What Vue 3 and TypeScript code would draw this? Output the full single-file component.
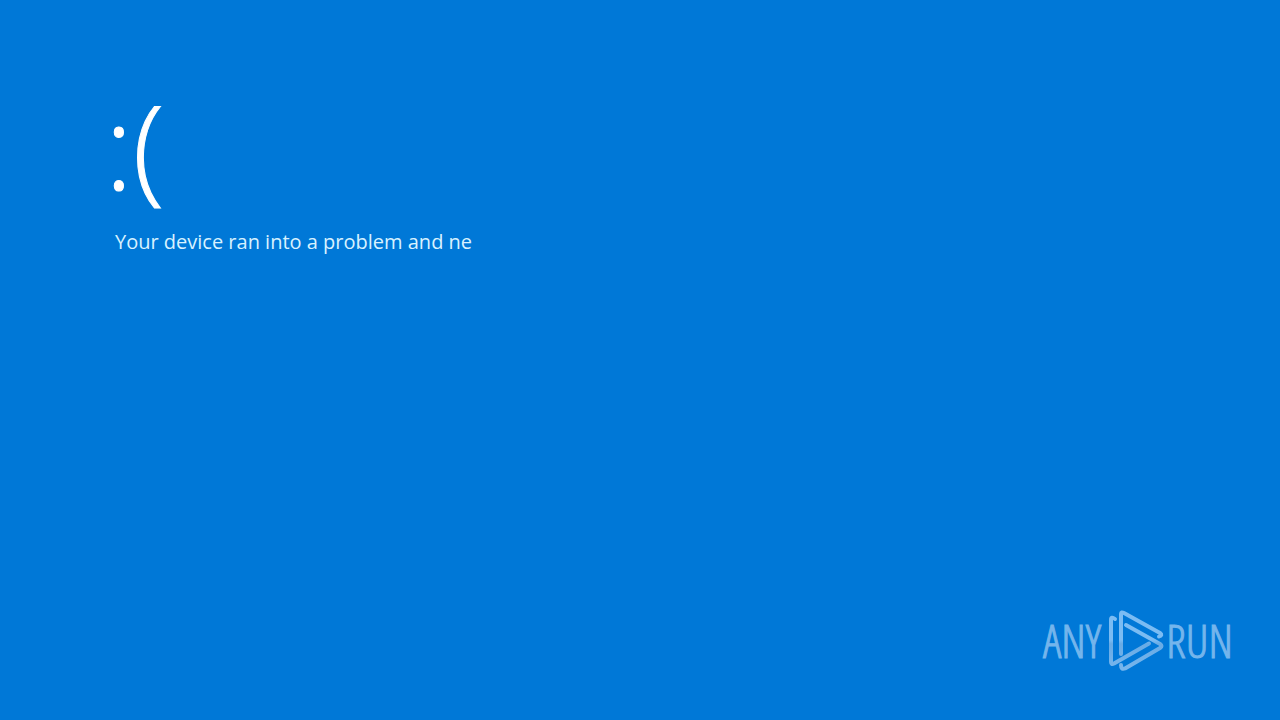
<script setup lang="ts">
const face: string = ':('
const message: string = 'Your device ran into a problem and ne'
</script>

<template>
  <main class="screen">
    <section class="notice">
      <h1 class="face">{{ face }}</h1>
      <p class="message">{{ message }}</p>
    </section>
    <footer class="brand" aria-label="ANY RUN">
      <span class="word">ANY</span>
      <svg class="mark" viewBox="0 0 60 64" aria-hidden="true">
        <defs>
          <linearGradient id="sheen" x1="0" y1="0" x2="0" y2="64" gradientUnits="userSpaceOnUse">
            <stop offset="0" stop-color="#7bbcf3" />
            <stop offset="0.5" stop-color="#7bbcf3" />
            <stop offset="0.56" stop-color="#68abe5" />
            <stop offset="1" stop-color="#78b7ee" />
          </linearGradient>
        </defs>
        <g fill="none" stroke="url(#sheen)" stroke-width="4" stroke-linecap="round" stroke-linejoin="round">
          <path d="M9 11 Q5 8 5 12 V54 Q5 57 8 55.500 L43 35.500" />
          <path d="M15 46 V6 Q15 3.500 18 5 L54 25 Q57 27 53 28.500" />
          <path d="M20 17 L54 36 Q57 38 54 40 L19 60.500 Q15 62 15 57" />
        </g>
      </svg>
      <span class="word">RUN</span>
    </footer>
  </main>
</template>

<style>
body {
  margin: 0;
  background: #0078d7;
}
</style>

<style scoped>
.screen {
  box-sizing: border-box;
  min-height: 100vh;
  display: flex;
  flex-direction: column;
  justify-content: space-between;
  padding: 75px 47px 48px 105px;
  background: #0078d7;
  color: #fff;
  font-family: "Open Sans", "Noto Sans", sans-serif;
}

.face {
  margin: 0;
  font-size: 116px;
  line-height: 140px;
  font-weight: 300;
  -webkit-text-stroke: 1px #fff;
}

.message {
  margin: 0;
  padding: 9px 0 0 10px;
  color: #d8f2ff;
  font-size: 20px;
  line-height: 36px;
  font-weight: 400;
}

.brand {
  display: flex;
  align-items: center;
  justify-content: flex-end;
}

.word {
  color: #74b5ec;
  font-family: "Open Sans Condensed Light", "Open Sans Light Condensed", "Open Sans Cond Light", "Roboto Condensed Light", "Roboto Condensed", "Liberation Sans Narrow", "Liberation Sans", sans-serif;
  font-size: 46px;
  line-height: 64px;
  font-weight: 300;
  -webkit-text-stroke: 1px #74b5ec;
}

.mark {
  width: 60px;
  height: 64px;
  margin-left: 5px;
}
</style>
